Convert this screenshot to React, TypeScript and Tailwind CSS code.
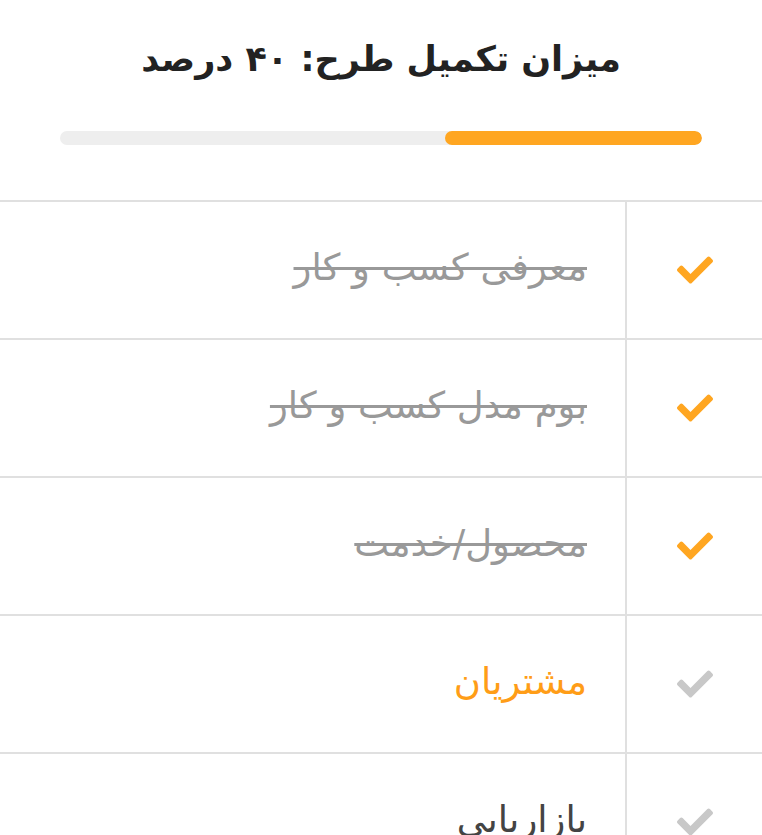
import { FaCheck } from "react-icons/fa";

type Step = {
  title: string;
  state: "done" | "current" | "todo";
};

const steps: Step[] = [
  { title: "معرفی کسب و کار", state: "done" },
  { title: "بوم مدل کسب و کار", state: "done" },
  { title: "محصول/خدمت", state: "done" },
  { title: "مشتریان", state: "current" },
  { title: "بازاریابی", state: "todo" },
];

export default function App() {
  const percent = 40;

  return (
    <div
      dir="rtl"
      className="w-[762px] h-[835px] overflow-hidden bg-white"
      style={{ fontFamily: '"DejaVu Sans", "Noto Sans", sans-serif' }}
    >
      {/* Header */}
      <div className="pt-[33px] text-center">
        <h1 className="text-[35px] leading-[52px] font-bold text-[#222]">
          میزان تکمیل طرح: ۴۰ درصد
        </h1>
      </div>

      {/* Progress */}
      <div className="px-[60px] pt-[46px] pb-[55px]">
        <div className="h-[14px] w-full rounded-full bg-[#eeeeee] overflow-hidden">
          <div
            className="h-full rounded-full bg-[#ffa621]"
            style={{ width: `${percent}%` }}
          />
        </div>
      </div>

      {/* Steps */}
      <div className="border-t-2 border-[#e0e0e0]">
        {steps.map((step) => (
          <div
            key={step.title}
            className="flex h-[138px] border-b-2 border-[#e0e0e0]"
          >
            <div className="w-[137px] shrink-0 flex items-center justify-center border-l-2 border-[#e0e0e0]">
              <FaCheck
                className={
                  step.state === "done"
                    ? "w-[36px] h-[36px] text-[#ffa621]"
                    : "w-[36px] h-[36px] text-[#c8c8c8]"
                }
              />
            </div>
            <div className="flex-1 flex items-center pr-[38px] pb-[4px]">
              <span
                className={
                  step.state === "done"
                    ? "text-[37px] text-[#999999] line-through decoration-[3px]"
                    : step.state === "current"
                      ? "text-[37px] text-[#ff9d17]"
                      : "text-[37px] text-[#444444]"
                }
              >
                {step.title}
              </span>
            </div>
          </div>
        ))}
      </div>
    </div>
  );
}
